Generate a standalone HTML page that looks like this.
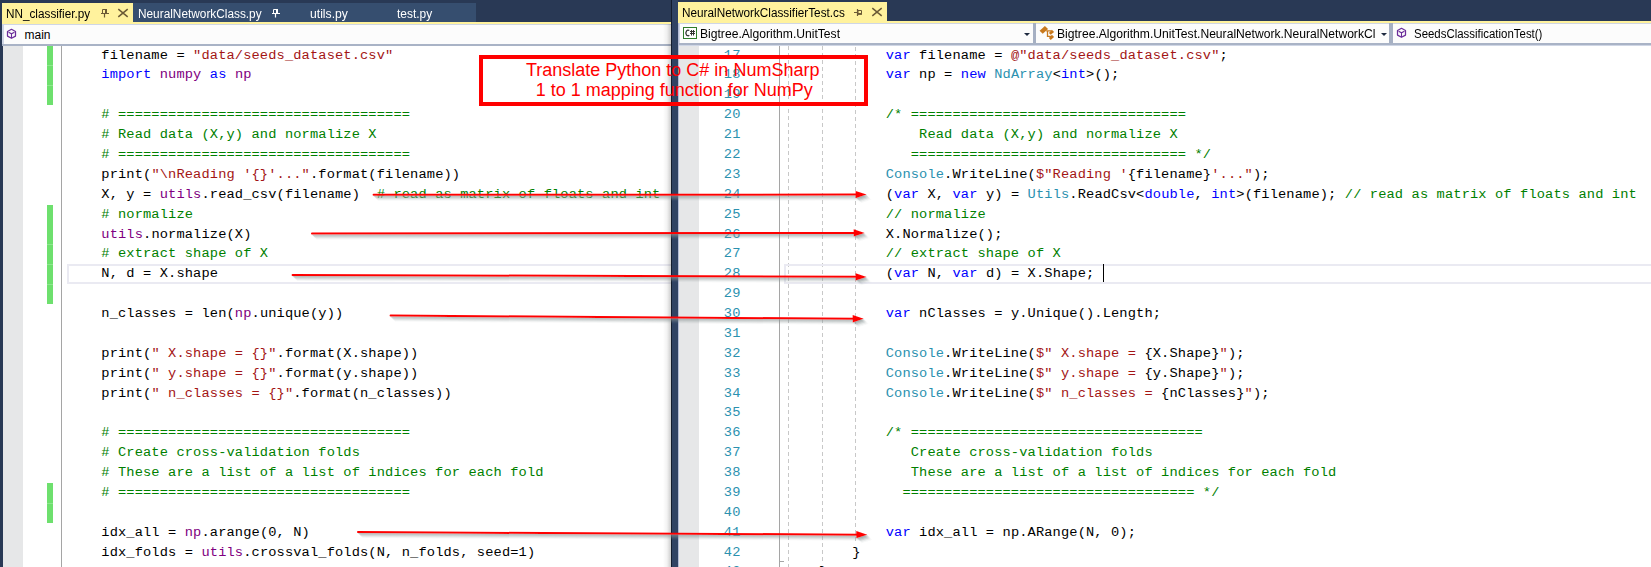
<!DOCTYPE html>
<html><head><meta charset="utf-8">
<style>
*{margin:0;padding:0;box-sizing:border-box}
html,body{width:1651px;height:567px;overflow:hidden;background:#fff}
body{position:relative;font-family:"Liberation Sans",sans-serif}
.a{position:absolute}
.ln{position:absolute;white-space:pre;font-family:"Liberation Mono",monospace;font-size:13.7px;letter-spacing:0.1317px;line-height:19.88px;height:19.88px;color:#000}
.k{color:#0000ff}.s{color:#a31515}.c{color:#008000}.t{color:#2b91af}.m{color:#800080}
.num{color:#2b91af}
.ui{position:absolute;white-space:pre;font-family:"Liberation Sans",sans-serif;font-size:12px;line-height:14px}
.gb{position:absolute;left:47px;width:6px;background:#6ee06e}
.dash{position:absolute;top:46px;width:1px;height:522px;background:repeating-linear-gradient(to bottom,#c8c8c8 0 4px,transparent 4px 7px)}
</style></head><body>

<!-- ===== top environment bar ===== -->
<div class="a" style="left:0;top:0;width:1651px;height:24px;background:#293955"></div>
<div class="a" style="left:0;top:0;width:3px;height:567px;background:#293955"></div>

<!-- ===== LEFT PANE ===== -->
<!-- active tab -->
<div class="a" style="left:2px;top:3px;width:131px;height:19px;background:#fff29d"></div>
<div class="ui" style="left:6px;top:7.2px;color:#000;font-size:12.3px;transform:scaleX(0.955);transform-origin:0 0">NN_classifier.py</div>
<svg class="a" style="left:100px;top:8px" width="10" height="10" viewBox="0 0 10 10">
  <path d="M2.5 1.5h4v4h-4z" fill="none" stroke="#6b5a36" stroke-width="1"/>
  <path d="M5 1h2v5h-2z" fill="#6b5a36"/>
  <path d="M1 5.5h8M4.5 5.5v4" stroke="#6b5a36" stroke-width="1.2"/>
</svg>
<svg class="a" style="left:117px;top:8px" width="12" height="10" viewBox="0 0 12 10">
  <path d="M1.3 1.2L10.7 8.8M10.7 1.2L1.3 8.8" stroke="#6b5a36" stroke-width="1.5"/>
</svg>
<!-- inactive tabs -->
<div class="a" style="left:133px;top:3px;width:343px;height:19px;background:#364e6f"></div>
<div class="ui" style="left:137.5px;top:7.2px;color:#fff;font-size:12.3px;transform:scaleX(0.962);transform-origin:0 0">NeuralNetworkClass.py</div>
<svg class="a" style="left:271px;top:8px" width="10" height="10" viewBox="0 0 10 10">
  <path d="M2.5 1.5h4v4h-4z" fill="none" stroke="#fff" stroke-width="1"/>
  <path d="M5 1h2v5h-2z" fill="#fff"/>
  <path d="M1 5.5h8M4.5 5.5v4" stroke="#fff" stroke-width="1.2"/>
</svg>
<div class="ui" style="left:310px;top:7.2px;color:#fff;font-size:12.3px;transform:scaleX(0.99);transform-origin:0 0">utils.py</div>
<div class="ui" style="left:396.6px;top:7.2px;color:#fff;font-size:12.3px;transform:scaleX(0.97);transform-origin:0 0">test.py</div>
<!-- yellow line + nav bar -->
<div class="a" style="left:2px;top:22px;width:669px;height:2px;background:#fff29d"></div>
<div class="a" style="left:2px;top:24px;width:669px;height:21.7px;background:#cfd6e5"></div>
<div class="a" style="left:3.5px;top:25px;width:667.5px;height:18.7px;background:#fcfcfc"></div>
<div class="a" style="left:2px;top:43.7px;width:669px;height:2px;background:#a9b3c6"></div>
<svg class="a" style="left:6px;top:28px" width="12" height="12" viewBox="0 0 12 12">
  <path d="M5.5 1.3L9.5 3.5V8.1L5.5 10.3L1.5 8.1V3.5Z" fill="none" stroke="#6b2d9a" stroke-width="1.25" stroke-linejoin="round"/>
  <path d="M2.6 4.2L5.5 5.8L8.4 4.2M5.5 5.8V10" fill="none" stroke="#6b2d9a" stroke-width="1.1"/>
</svg>
<div class="ui" style="left:24.5px;top:27.5px;color:#000;font-size:12px">main</div>

<!-- code area left -->
<div class="a" style="left:2.5px;top:45.7px;width:20.5px;height:522px;background:#e6e7e8"></div>
<div class="gb" style="top:45.60px;height:19.88px"></div>
<div class="gb" style="top:65.48px;height:19.88px;border-top:1px solid #8ee88e"></div>
<div class="gb" style="top:85.36px;height:19.88px;border-top:1px solid #8ee88e"></div>
<div class="gb" style="top:204.64px;height:39.76px"></div>
<div class="gb" style="top:244.40px;height:19.88px;border-top:1px solid #8ee88e"></div>
<div class="gb" style="top:264.28px;height:19.88px;border-top:1px solid #8ee88e"></div>
<div class="gb" style="top:284.16px;height:19.88px;border-top:1px solid #8ee88e"></div>
<div class="gb" style="top:482.96px;height:19.88px"></div>
<div class="gb" style="top:502.84px;height:19.88px;border-top:1px solid #8ee88e"></div>
<div class="a" style="left:61px;top:45.7px;width:1px;height:522px;background:#a5a5a5"></div>
<div class="a" style="left:67px;top:263.98px;width:606px;height:19.8px;border:2px solid #eaeaf2;border-right:none"></div>
<div class="ln" style="left:101.30px;top:45.60px">filename = <span class="s">&quot;data/seeds_dataset.csv&quot;</span></div>
<div class="ln" style="left:101.30px;top:65.48px"><span class="k">import</span> <span class="m">numpy</span> <span class="k">as</span> <span class="m">np</span></div>
<div class="ln" style="left:101.30px;top:105.24px"><span class="c"># ===================================</span></div>
<div class="ln" style="left:101.30px;top:125.12px"><span class="c"># Read data (X,y) and normalize X</span></div>
<div class="ln" style="left:101.30px;top:145.00px"><span class="c"># ===================================</span></div>
<div class="ln" style="left:101.30px;top:164.88px">print(<span class="s">&quot;\nReading &#x27;{}&#x27;...&quot;</span>.format(filename))</div>
<div class="ln" style="left:101.30px;top:184.76px">X, y = <span class="m">utils</span>.read_csv(filename)  <span class="c"># read as matrix of floats and int</span></div>
<div class="ln" style="left:101.30px;top:204.64px"><span class="c"># normalize</span></div>
<div class="ln" style="left:101.30px;top:224.52px"><span class="m">utils</span>.normalize(X)</div>
<div class="ln" style="left:101.30px;top:244.40px"><span class="c"># extract shape of X</span></div>
<div class="ln" style="left:101.30px;top:264.28px">N, d = X.shape</div>
<div class="ln" style="left:101.30px;top:304.04px">n_classes = len(<span class="m">np</span>.unique(y))</div>
<div class="ln" style="left:101.30px;top:343.80px">print(<span class="s">&quot; X.shape = {}&quot;</span>.format(X.shape))</div>
<div class="ln" style="left:101.30px;top:363.68px">print(<span class="s">&quot; y.shape = {}&quot;</span>.format(y.shape))</div>
<div class="ln" style="left:101.30px;top:383.56px">print(<span class="s">&quot; n_classes = {}&quot;</span>.format(n_classes))</div>
<div class="ln" style="left:101.30px;top:423.32px"><span class="c"># ===================================</span></div>
<div class="ln" style="left:101.30px;top:443.20px"><span class="c"># Create cross-validation folds</span></div>
<div class="ln" style="left:101.30px;top:463.08px"><span class="c"># These are a list of a list of indices for each fold</span></div>
<div class="ln" style="left:101.30px;top:482.96px"><span class="c"># ===================================</span></div>
<div class="ln" style="left:101.30px;top:522.72px">idx_all = <span class="m">np</span>.arange(0, N)</div>
<div class="ln" style="left:101.30px;top:542.60px">idx_folds = <span class="m">utils</span>.crossval_folds(N, n_folds, seed=1)</div>
<div class="a" style="left:663px;top:24px;width:8px;height:543px;background:linear-gradient(to right,rgba(0,0,0,0),rgba(0,0,0,0.05) 50%,rgba(0,0,0,0.2))"></div>

<!-- ===== DIVIDER ===== -->
<div class="a" style="left:671px;top:0;width:7px;height:567px;background:#304363"></div>
<div class="a" style="left:678px;top:23px;width:1px;height:544px;background:#b4bcd6"></div>
<div class="a" style="left:671px;top:0;width:1px;height:567px;background:#131d2e"></div>

<!-- ===== RIGHT PANE ===== -->
<div class="a" style="left:678px;top:0;width:973px;height:21px;background:#293955"></div>
<div class="a" style="left:678px;top:2px;width:209px;height:19px;background:#fff29d"></div>
<div class="ui" style="left:681.6px;top:5.6px;color:#000;font-size:12.3px;transform:scaleX(0.957);transform-origin:0 0">NeuralNetworkClassifierTest.cs</div>
<svg class="a" style="left:853px;top:8px" width="11" height="10" viewBox="0 0 11 10">
  <path d="M1 4.5h3M4.5 1v7" stroke="#6b5a36" stroke-width="1.2"/>
  <path d="M5 2.5h3.5v3.5h-3.5z" fill="none" stroke="#6b5a36" stroke-width="1"/>
  <path d="M5 5h4v1.8h-4z" fill="#6b5a36"/>
</svg>
<svg class="a" style="left:871px;top:7px" width="12" height="10" viewBox="0 0 12 10">
  <path d="M1.3 1.2L10.7 8.8M10.7 1.2L1.3 8.8" stroke="#6b5a36" stroke-width="1.5"/>
</svg>
<div class="a" style="left:678px;top:21px;width:973px;height:2px;background:#fff29d"></div>
<div class="a" style="left:678.7px;top:23px;width:973px;height:22.5px;background:#cfd6e5"></div>
<div class="a" style="left:680px;top:24px;width:352.7px;height:19.3px;background:#fcfcfc"></div>
<div class="a" style="left:1032.7px;top:23px;width:3.6px;height:21px;background:#a6b0c3"></div>
<div class="a" style="left:1036.3px;top:24px;width:353px;height:19.3px;background:#fcfcfc"></div>
<div class="a" style="left:1389.3px;top:23px;width:3.7px;height:21px;background:#a6b0c3"></div>
<div class="a" style="left:1393px;top:24px;width:258px;height:19.3px;background:#fcfcfc"></div>
<div class="a" style="left:678.7px;top:43.3px;width:973px;height:2.2px;background:#a9b3c6"></div>
<!-- C# icon -->
<svg class="a" style="left:683px;top:27px" width="14" height="12" viewBox="0 0 14 12">
  <rect x="0.5" y="0.5" width="13" height="11" fill="#fff" stroke="#2f7d2b" stroke-width="1"/>
  <path d="M6.3 3.6A2.2 2.8 0 1 0 6.3 8.3" fill="none" stroke="#333" stroke-width="1.25"/>
  <path d="M8.5 3V8.5M10.5 3V8.5M7 4.5H12M7 6.5H12" fill="none" stroke="#333" stroke-width="1"/>
</svg>
<div class="ui" style="left:700.2px;top:27.4px;color:#000;font-size:12.3px;transform:scaleX(0.985);transform-origin:0 0">Bigtree.Algorithm.UnitTest</div>
<svg class="a" style="left:1023px;top:32px" width="8" height="5" viewBox="0 0 8 5"><path d="M1 1h6L4 4z" fill="#1e2a40"/></svg>
<!-- class icon -->
<svg class="a" style="left:1039px;top:25px" width="16" height="16" viewBox="0 0 16 16">
  <path d="M5.9 0.9L9.1 4.1L3.7 8.8L0.6 5.8Z" fill="#c8791e"/>
  <path d="M12.9 4.7L15.1 6.9L11.7 9.8L9.9 7.9Z" fill="#c8791e"/>
  <path d="M12.9 9.8L15.1 12L11.7 14.9L9.9 13Z" fill="#c8791e"/>
  <path d="M7.2 5.8H12.3M8.5 5.8V11.4H12" fill="none" stroke="#c8791e" stroke-width="1.3"/>
</svg>
<div class="a" style="left:1057px;top:24px;width:318px;height:19px;overflow:hidden">
<div class="ui" style="left:0;top:3.4px;color:#000;font-size:12.3px;transform:scaleX(0.985);transform-origin:0 0">Bigtree.Algorithm.UnitTest.NeuralNetwork.NeuralNetworkClassifierTest</div>
</div>
<svg class="a" style="left:1380px;top:32px" width="8" height="5" viewBox="0 0 8 5"><path d="M1 1h6L4 4z" fill="#1e2a40"/></svg>
<svg class="a" style="left:1396px;top:27.3px" width="12" height="12" viewBox="0 0 12 12">
  <path d="M5.5 1.3L9.5 3.5V8.1L5.5 10.3L1.5 8.1V3.5Z" fill="none" stroke="#6b2d9a" stroke-width="1.25" stroke-linejoin="round"/>
  <path d="M2.6 4.2L5.5 5.8L8.4 4.2M5.5 5.8V10" fill="none" stroke="#6b2d9a" stroke-width="1.1"/>
</svg>
<div class="ui" style="left:1413.8px;top:26.6px;color:#000;font-size:12.3px;transform:scaleX(0.93);transform-origin:0 0">SeedsClassificationTest()</div>

<!-- code area right -->
<div class="a" style="left:678.7px;top:45.5px;width:20.3px;height:522px;background:#e6e7e8"></div>
<div class="ln num" style="left:723.79px;top:45.60px">17</div>
<div class="ln num" style="left:723.79px;top:65.48px">18</div>
<div class="ln num" style="left:723.79px;top:85.36px">19</div>
<div class="ln num" style="left:723.79px;top:105.24px">20</div>
<div class="ln num" style="left:723.79px;top:125.12px">21</div>
<div class="ln num" style="left:723.79px;top:145.00px">22</div>
<div class="ln num" style="left:723.79px;top:164.88px">23</div>
<div class="ln num" style="left:723.79px;top:184.76px">24</div>
<div class="ln num" style="left:723.79px;top:204.64px">25</div>
<div class="ln num" style="left:723.79px;top:224.52px">26</div>
<div class="ln num" style="left:723.79px;top:244.40px">27</div>
<div class="ln num" style="left:723.79px;top:264.28px">28</div>
<div class="ln num" style="left:723.79px;top:284.16px">29</div>
<div class="ln num" style="left:723.79px;top:304.04px">30</div>
<div class="ln num" style="left:723.79px;top:323.92px">31</div>
<div class="ln num" style="left:723.79px;top:343.80px">32</div>
<div class="ln num" style="left:723.79px;top:363.68px">33</div>
<div class="ln num" style="left:723.79px;top:383.56px">34</div>
<div class="ln num" style="left:723.79px;top:403.44px">35</div>
<div class="ln num" style="left:723.79px;top:423.32px">36</div>
<div class="ln num" style="left:723.79px;top:443.20px">37</div>
<div class="ln num" style="left:723.79px;top:463.08px">38</div>
<div class="ln num" style="left:723.79px;top:482.96px">39</div>
<div class="ln num" style="left:723.79px;top:502.84px">40</div>
<div class="ln num" style="left:723.79px;top:522.72px">41</div>
<div class="ln num" style="left:723.79px;top:542.60px">42</div>
<div class="ln num" style="left:723.79px;top:562.48px">43</div>
<div class="a" style="left:779px;top:45.5px;width:1px;height:522px;background:#a5a5a5"></div>
<div class="a" style="left:779px;top:561px;width:5px;height:1px;background:#a5a5a5"></div>
<div class="dash" style="left:788px"></div>
<div class="dash" style="left:822px;height:516px"></div>
<div class="dash" style="left:855px;top:47.3px;height:495.5px"></div>
<div class="a" style="left:784px;top:263.98px;width:880px;height:19.8px;border:2px solid #eaeaf2;border-right:none"></div>
<div class="ln" style="left:885.70px;top:45.60px"><span class="k">var</span> filename = <span class="s">@&quot;data/seeds_dataset.csv&quot;</span>;</div>
<div class="ln" style="left:885.70px;top:65.48px"><span class="k">var</span> np = <span class="k">new</span> <span class="t">NdArray</span>&lt;<span class="k">int</span>&gt;();</div>
<div class="ln" style="left:885.70px;top:105.24px"><span class="c">/* =================================</span></div>
<div class="ln" style="left:885.70px;top:125.12px"><span class="c">    Read data (X,y) and normalize X</span></div>
<div class="ln" style="left:885.70px;top:145.00px"><span class="c">   ================================= */</span></div>
<div class="ln" style="left:885.70px;top:164.88px"><span class="t">Console</span>.WriteLine(<span class="s">$&quot;Reading &#x27;</span>{filename}<span class="s">&#x27;...&quot;</span>);</div>
<div class="ln" style="left:885.70px;top:184.76px">(<span class="k">var</span> X, <span class="k">var</span> y) = <span class="t">Utils</span>.ReadCsv&lt;<span class="k">double</span>, <span class="k">int</span>&gt;(filename); <span class="c">// read as matrix of floats and int</span></div>
<div class="ln" style="left:885.70px;top:204.64px"><span class="c">// normalize</span></div>
<div class="ln" style="left:885.70px;top:224.52px">X.Normalize();</div>
<div class="ln" style="left:885.70px;top:244.40px"><span class="c">// extract shape of X</span></div>
<div class="ln" style="left:885.70px;top:264.28px">(<span class="k">var</span> N, <span class="k">var</span> d) = X.Shape; </div>
<div class="ln" style="left:885.70px;top:304.04px"><span class="k">var</span> nClasses = y.Unique().Length;</div>
<div class="ln" style="left:885.70px;top:343.80px"><span class="t">Console</span>.WriteLine(<span class="s">$&quot; X.shape = </span>{X.Shape}<span class="s">&quot;</span>);</div>
<div class="ln" style="left:885.70px;top:363.68px"><span class="t">Console</span>.WriteLine(<span class="s">$&quot; y.shape = </span>{y.Shape}<span class="s">&quot;</span>);</div>
<div class="ln" style="left:885.70px;top:383.56px"><span class="t">Console</span>.WriteLine(<span class="s">$&quot; n_classes = </span>{nClasses}<span class="s">&quot;</span>);</div>
<div class="ln" style="left:885.70px;top:423.32px"><span class="c">/* ===================================</span></div>
<div class="ln" style="left:885.70px;top:443.20px"><span class="c">   Create cross-validation folds</span></div>
<div class="ln" style="left:885.70px;top:463.08px"><span class="c">   These are a list of a list of indices for each fold</span></div>
<div class="ln" style="left:885.70px;top:482.96px"><span class="c">  =================================== */</span></div>
<div class="ln" style="left:885.70px;top:522.72px"><span class="k">var</span> idx_all = np.ARange(N, 0);</div>
<div class="ln" style="left:852.29px;top:542.60px">}</div>
<div class="ln" style="left:818.88px;top:562.48px">}</div>
<div class="a" style="left:1102.88px;top:264px;width:1px;height:17.5px;background:#000"></div>

<!-- ===== ANNOTATIONS ===== -->
<div class="a" style="left:479px;top:55px;width:389px;height:51px;border:4px solid #ff0000"></div>
<div class="a" style="left:478.2px;top:61.2px;width:389px;text-align:center;color:#ff0000;font-size:18px;line-height:19.8px;white-space:pre">Translate Python to C# in NumSharp</div>
<div class="a" style="left:479.8px;top:81px;width:389px;text-align:center;color:#ff0000;font-size:18px;line-height:19.8px;white-space:pre">1 to 1 mapping function for NumPy</div>

<svg class="a" style="left:0;top:0" width="1651" height="567" viewBox="0 0 1651 567">
  <defs>
    <filter id="sh" x="-5%" y="-300%" width="115%" height="700%">
      <feColorMatrix in="SourceAlpha" type="matrix" values="0 0 0 0 0.25  0 0 0 0 0.3  0 0 0 0 0.3  0 0 0 1 0" result="g"/>
      <feOffset in="g" dx="1" dy="1" result="o1"/>
      <feOffset in="g" dx="2" dy="2" result="o2"/>
      <feOffset in="g" dx="3" dy="3" result="o3"/>
      <feOffset in="g" dx="4" dy="4" result="o4"/>
      <feOffset in="g" dx="5" dy="5" result="o5"/>
      <feComponentTransfer in="o1" result="p1"><feFuncA type="linear" slope="0.4"/></feComponentTransfer>
      <feComponentTransfer in="o2" result="p2"><feFuncA type="linear" slope="0.32"/></feComponentTransfer>
      <feComponentTransfer in="o3" result="p3"><feFuncA type="linear" slope="0.24"/></feComponentTransfer>
      <feComponentTransfer in="o4" result="p4"><feFuncA type="linear" slope="0.13"/></feComponentTransfer>
      <feComponentTransfer in="o5" result="p5"><feFuncA type="linear" slope="0.07"/></feComponentTransfer>
      <feMerge result="m"><feMergeNode in="p5"/><feMergeNode in="p4"/><feMergeNode in="p3"/><feMergeNode in="p2"/><feMergeNode in="p1"/></feMerge>
      <feGaussianBlur in="m" stdDeviation="0.7" result="b"/>
      <feMerge><feMergeNode in="b"/><feMergeNode in="SourceGraphic"/></feMerge>
    </filter>
  </defs>
  <g filter="url(#sh)" fill="#ff0000" stroke="#ff0000"><path d="M373.6 194.8L856.6 194.60" stroke-width="2.0" stroke-linecap="round" fill="none"/>
<path d="M855.6 190.90L866.6 194.6L855.6 198.30Z" stroke="none"/>
<path d="M312 233.4L854.7 232.91" stroke-width="2.0" stroke-linecap="round" fill="none"/>
<path d="M853.7 229.21L864.7 232.9L853.7 236.61Z" stroke="none"/>
<path d="M292.6 274.9L856.6 276.86" stroke-width="2.0" stroke-linecap="round" fill="none"/>
<path d="M855.6 273.16L866.6 276.9L855.6 280.56Z" stroke="none"/>
<path d="M390.6 315.6L853.7 318.73" stroke-width="2.0" stroke-linecap="round" fill="none"/>
<path d="M852.7 315.03L863.7 318.8L852.7 322.43Z" stroke="none"/>
<path d="M358 532.1L857.3 534.64" stroke-width="2.0" stroke-linecap="round" fill="none"/>
<path d="M856.3 530.94L867.3 534.7L856.3 538.34Z" stroke="none"/></g>
</svg>
</body></html>
